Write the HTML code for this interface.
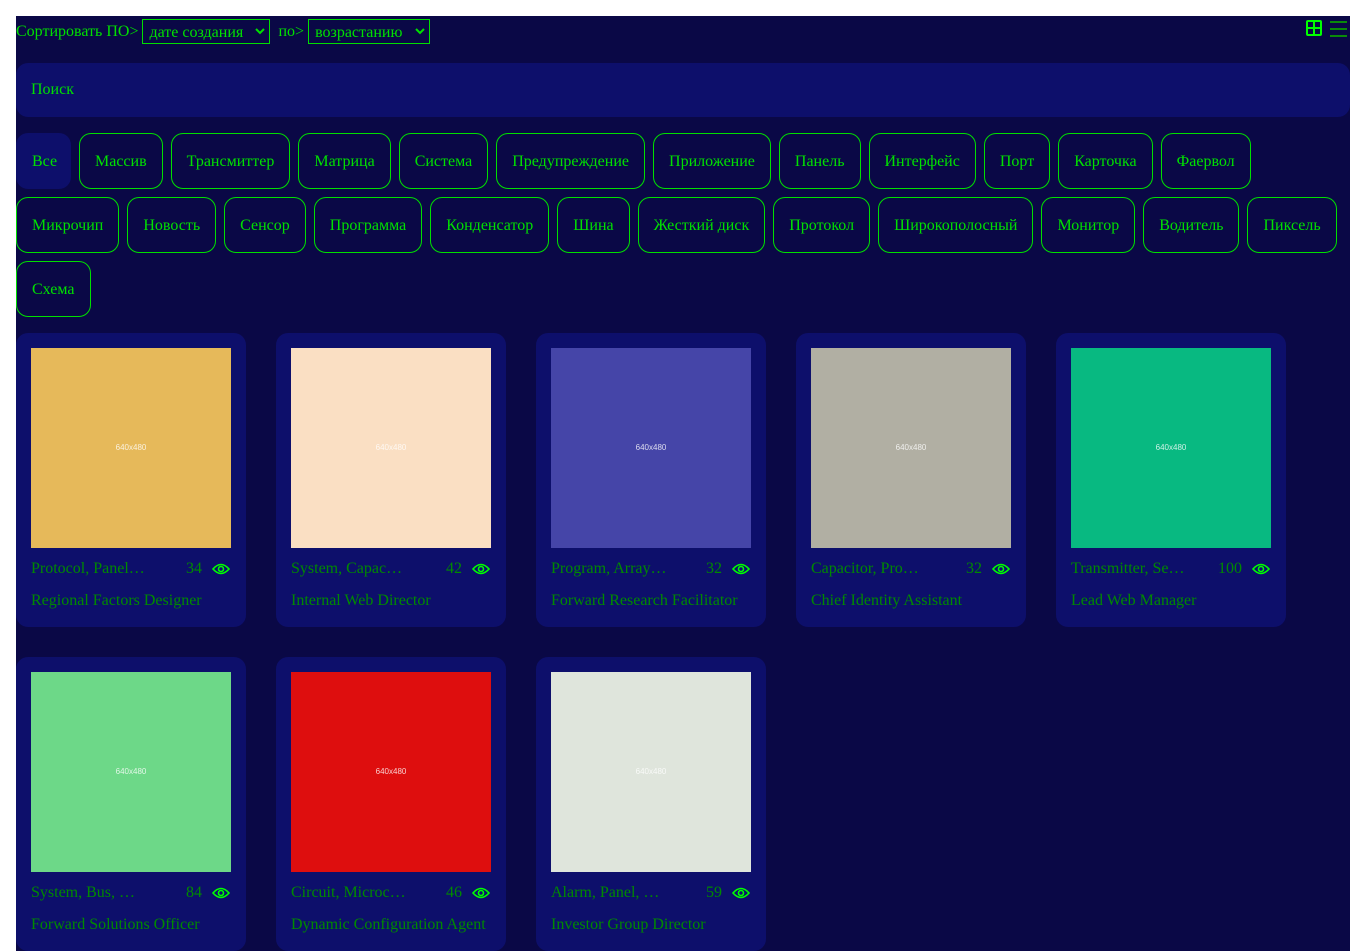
<!DOCTYPE html>
<html><head><meta charset="utf-8"><style>
*{box-sizing:border-box;margin:0;padding:0}
html,body{width:1350px;height:951px;background:#fff;overflow:hidden}
body{font-family:"Liberation Serif",serif;font-size:16px}
#app{position:absolute;left:16px;top:16px;width:1334px;height:935px;background:#0a0846;overflow:hidden}
.top{position:absolute;left:0;top:3px;color:#00e000;display:flex;align-items:center;height:25px}
select{appearance:none;-webkit-appearance:none;background:#0a0846;color:#00e000;border:1px solid #00e000;font-family:"Liberation Serif",serif;font-size:16px;height:25px;padding:2px 24px 0 6px;position:relative}
.sel{position:relative;display:inline-block}
.sel svg{position:absolute;right:5px;top:9px}
.icons{position:absolute;right:3px;top:3px}
.search{position:absolute;left:0;top:47px;width:1334px;height:54px;background:#0d0f6b;border-radius:12px;color:#00e000;padding:18px 15px}
.tags{position:absolute;left:0;top:117px;width:1334px;display:flex;flex-wrap:wrap;gap:8px}
.tag{height:56px;border:1px solid #00e000;border-radius:12px;color:#00e000;padding:1px 15px 0;display:flex;align-items:center}
.tag.all{border-color:transparent;background:#0d0f6b;width:55px}
.card{position:absolute;width:230px;height:294px;background:#0d0f6b;border-radius:12px}
.img{position:absolute;left:15px;top:15px;width:200px;height:200px;display:flex;align-items:center;justify-content:center;color:rgba(255,255,255,.8);font-size:8px;font-family:"Liberation Sans",sans-serif;padding-bottom:2px}
.meta{position:absolute;left:15px;top:225px;width:200px;color:#008a00;display:flex;align-items:center;height:22px}
.meta .t{width:140px;white-space:nowrap;overflow:hidden;text-overflow:ellipsis}
.meta .n{margin-left:auto;margin-right:10px}
.meta svg{margin-top:-1px;margin-right:1px}
.name{position:absolute;left:15px;top:259px;color:#008a00}
</style></head><body><div id="app">
<div class="top">Сортировать ПО&gt;&nbsp;<span class="sel"><select style="width:128px"><option>дате создания</option></select><svg width="10" height="7" viewBox="0 0 10 7"><path d="M1 1l4 4 4-4" stroke="#00e000" stroke-width="2" fill="none"/></svg></span>&nbsp;&nbsp;по&gt;&nbsp;<span class="sel"><select style="width:122px"><option>возрастанию</option></select><svg width="10" height="7" viewBox="0 0 10 7"><path d="M1 1l4 4 4-4" stroke="#00e000" stroke-width="2" fill="none"/></svg></span></div>
<svg class="icons" width="44" height="20" viewBox="0 0 44 20"><rect x="4" y="2" width="14" height="14" rx="1" fill="none" stroke="#00ff00" stroke-width="2"/><path d="M11 2v14M4 9h14" stroke="#00ff00" stroke-width="2"/><path d="M27 3h17M27 10h17M27 17h17" stroke="#0a8a0a" stroke-width="2"/></svg>
<div class="search">Поиск</div>
<div class="tags">
<div class="tag all">Все</div><div class="tag">Массив</div><div class="tag">Трансмиттер</div><div class="tag">Матрица</div><div class="tag">Система</div><div class="tag">Предупреждение</div><div class="tag">Приложение</div><div class="tag">Панель</div><div class="tag">Интерфейс</div><div class="tag">Порт</div><div class="tag">Карточка</div><div class="tag">Фаервол</div>
<div class="tag">Микрочип</div><div class="tag">Новость</div><div class="tag">Сенсор</div><div class="tag">Программа</div><div class="tag">Конденсатор</div><div class="tag">Шина</div><div class="tag">Жесткий диск</div><div class="tag">Протокол</div><div class="tag">Широкополосный</div><div class="tag">Монитор</div><div class="tag">Водитель</div><div class="tag">Пиксель</div>
<div class="tag">Схема</div>
</div>
<div class="card" style="left:0;top:317px"><div class="img" style="background:#e6b95a">640x480</div><div class="meta"><span class="t">Protocol, Panel…</span><span class="n">34</span><svg width="18" height="12" viewBox="0 0 18 12"><path d="M1 6Q9-3 17 6Q9 15 1 6z" fill="none" stroke="#00ff00" stroke-width="1.6"/><circle cx="9" cy="6" r="2.5" fill="none" stroke="#00ff00" stroke-width="1.6"/></svg></div><div class="name">Regional Factors Designer</div></div>
<div class="card" style="left:260px;top:317px"><div class="img" style="background:#fadfc3">640x480</div><div class="meta"><span class="t">System, Capac…</span><span class="n">42</span><svg width="18" height="12" viewBox="0 0 18 12"><path d="M1 6Q9-3 17 6Q9 15 1 6z" fill="none" stroke="#00ff00" stroke-width="1.6"/><circle cx="9" cy="6" r="2.5" fill="none" stroke="#00ff00" stroke-width="1.6"/></svg></div><div class="name">Internal Web Director</div></div>
<div class="card" style="left:520px;top:317px"><div class="img" style="background:#4545a8">640x480</div><div class="meta"><span class="t">Program, Array…</span><span class="n">32</span><svg width="18" height="12" viewBox="0 0 18 12"><path d="M1 6Q9-3 17 6Q9 15 1 6z" fill="none" stroke="#00ff00" stroke-width="1.6"/><circle cx="9" cy="6" r="2.5" fill="none" stroke="#00ff00" stroke-width="1.6"/></svg></div><div class="name">Forward Research Facilitator</div></div>
<div class="card" style="left:780px;top:317px"><div class="img" style="background:#b1afa3">640x480</div><div class="meta"><span class="t">Capacitor, Pro…</span><span class="n">32</span><svg width="18" height="12" viewBox="0 0 18 12"><path d="M1 6Q9-3 17 6Q9 15 1 6z" fill="none" stroke="#00ff00" stroke-width="1.6"/><circle cx="9" cy="6" r="2.5" fill="none" stroke="#00ff00" stroke-width="1.6"/></svg></div><div class="name">Chief Identity Assistant</div></div>
<div class="card" style="left:1040px;top:317px"><div class="img" style="background:#08b981">640x480</div><div class="meta"><span class="t">Transmitter, Se…</span><span class="n">100</span><svg width="18" height="12" viewBox="0 0 18 12"><path d="M1 6Q9-3 17 6Q9 15 1 6z" fill="none" stroke="#00ff00" stroke-width="1.6"/><circle cx="9" cy="6" r="2.5" fill="none" stroke="#00ff00" stroke-width="1.6"/></svg></div><div class="name">Lead Web Manager</div></div>
<div class="card" style="left:0;top:641px"><div class="img" style="background:#6dd888">640x480</div><div class="meta"><span class="t">System, Bus, …</span><span class="n">84</span><svg width="18" height="12" viewBox="0 0 18 12"><path d="M1 6Q9-3 17 6Q9 15 1 6z" fill="none" stroke="#00ff00" stroke-width="1.6"/><circle cx="9" cy="6" r="2.5" fill="none" stroke="#00ff00" stroke-width="1.6"/></svg></div><div class="name">Forward Solutions Officer</div></div>
<div class="card" style="left:260px;top:641px"><div class="img" style="background:#de0e0e">640x480</div><div class="meta"><span class="t">Circuit, Microc…</span><span class="n">46</span><svg width="18" height="12" viewBox="0 0 18 12"><path d="M1 6Q9-3 17 6Q9 15 1 6z" fill="none" stroke="#00ff00" stroke-width="1.6"/><circle cx="9" cy="6" r="2.5" fill="none" stroke="#00ff00" stroke-width="1.6"/></svg></div><div class="name">Dynamic Configuration Agent</div></div>
<div class="card" style="left:520px;top:641px"><div class="img" style="background:#dfe5dc">640x480</div><div class="meta"><span class="t">Alarm, Panel, …</span><span class="n">59</span><svg width="18" height="12" viewBox="0 0 18 12"><path d="M1 6Q9-3 17 6Q9 15 1 6z" fill="none" stroke="#00ff00" stroke-width="1.6"/><circle cx="9" cy="6" r="2.5" fill="none" stroke="#00ff00" stroke-width="1.6"/></svg></div><div class="name">Investor Group Director</div></div>
</div></body></html>
